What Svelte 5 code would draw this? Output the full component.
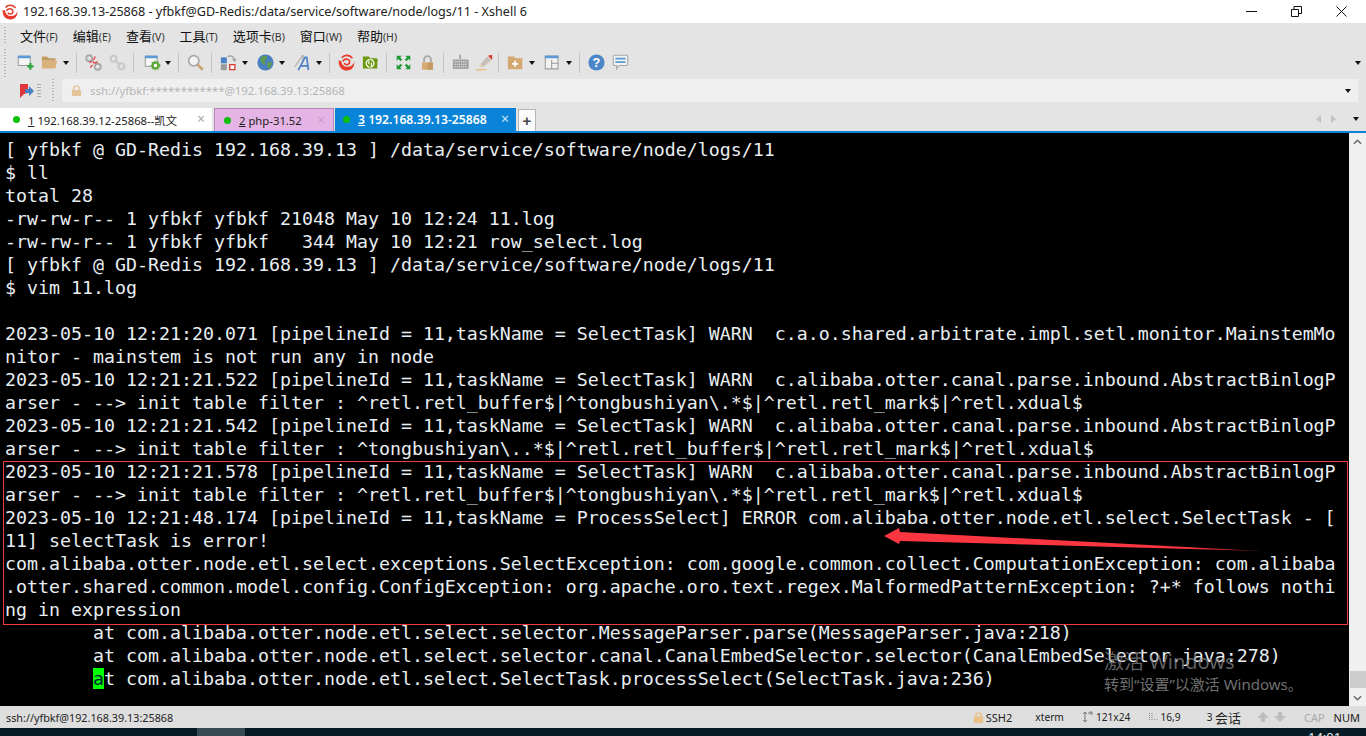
<script lang="ts">
	const menus = [
		['文件', 'F'], ['编辑', 'E'], ['查看', 'V'], ['工具', 'T'],
		['选项卡', 'B'], ['窗口', 'W'], ['帮助', 'H']
	];

	const lines = [
		'[ yfbkf @ GD-Redis 192.168.39.13 ] /data/service/software/node/logs/11',
		'$ ll',
		'total 28',
		'-rw-rw-r-- 1 yfbkf yfbkf 21048 May 10 12:24 11.log',
		'-rw-rw-r-- 1 yfbkf yfbkf   344 May 10 12:21 row_select.log',
		'[ yfbkf @ GD-Redis 192.168.39.13 ] /data/service/software/node/logs/11',
		'$ vim 11.log',
		'',
		'2023-05-10 12:21:20.071 [pipelineId = 11,taskName = SelectTask] WARN  c.a.o.shared.arbitrate.impl.setl.monitor.MainstemMo',
		'nitor - mainstem is not run any in node',
		'2023-05-10 12:21:21.522 [pipelineId = 11,taskName = SelectTask] WARN  c.alibaba.otter.canal.parse.inbound.AbstractBinlogP',
		'arser - --> init table filter : ^retl.retl_buffer$|^tongbushiyan\\.*$|^retl.retl_mark$|^retl.xdual$',
		'2023-05-10 12:21:21.542 [pipelineId = 11,taskName = SelectTask] WARN  c.alibaba.otter.canal.parse.inbound.AbstractBinlogP',
		'arser - --> init table filter : ^tongbushiyan\\..*$|^retl.retl_buffer$|^retl.retl_mark$|^retl.xdual$',
		'2023-05-10 12:21:21.578 [pipelineId = 11,taskName = SelectTask] WARN  c.alibaba.otter.canal.parse.inbound.AbstractBinlogP',
		'arser - --> init table filter : ^retl.retl_buffer$|^tongbushiyan\\.*$|^retl.retl_mark$|^retl.xdual$',
		'2023-05-10 12:21:48.174 [pipelineId = 11,taskName = ProcessSelect] ERROR com.alibaba.otter.node.etl.select.SelectTask - [',
		'11] selectTask is error!',
		'com.alibaba.otter.node.etl.select.exceptions.SelectException: com.google.common.collect.ComputationException: com.alibaba',
		'.otter.shared.common.model.config.ConfigException: org.apache.oro.text.regex.MalformedPatternException: ?+* follows nothi',
		'ng in expression',
		'        at com.alibaba.otter.node.etl.select.selector.MessageParser.parse(MessageParser.java:218)',
		'        at com.alibaba.otter.node.etl.select.selector.canal.CanalEmbedSelector.selector(CanalEmbedSelector.java:278)'
	];
</script>

<div class="window">
	<header class="title">
		<svg class="logo" viewBox="0 0 16 16" width="16" height="16">
			<path d="M.5 6c0 6 3 9.500 8 9.500s7-4 7-8.500c-1 3-3 5-6.500 5S3.500 10 3 6.500z" fill="#e8392c" />
			<path d="M6 8.500c.5 2 3.500 2 4.500.5s.5-3.500-1.500-4-4 .5-4.500 2M3.500 3.500C6 .5 11 .5 13.500 4" fill="none" stroke="#e8392c" stroke-width="1.500" />
		</svg>
		<span class="title__text">192.168.39.13-25868 - yfbkf@GD-Redis:/data/service/software/node/logs/11 - Xshell 6</span>
		<div class="title__controls">
			<svg viewBox="0 0 11 11" width="11" height="11"><path d="M0 5.500h11" stroke="#111" fill="none" /></svg>
			<svg viewBox="0 0 11 11" width="11" height="11"><path d="M.5 3.500h7v7h-7zM3 3.500V.5h7.500v7h-3" stroke="#111" fill="none" /></svg>
			<svg viewBox="0 0 11 11" width="11" height="11"><path d="M.5.500l10 10M10.500.500l-10 10" stroke="#111" fill="none" /></svg>
		</div>
	</header>

	<nav class="menu">
		<span class="grip"></span>
		{#each menus as m}
			<span class="menu__item">{m[0]}<small>({m[1]})</small></span>
		{/each}
	</nav>

	<div class="toolbar">
		<span class="grip"></span>
		<!-- new session -->
		<svg class="ic" viewBox="0 0 20 20"><path d="M1.500 2.500h14v11h-14z" fill="#f6f6f6" stroke="#8a8a8a" /><path d="M1 2h15v3H1z" fill="#5b9bd5" /><path d="M12 14.500h7.500M15.750 10.500v8" stroke="#2aa63a" stroke-width="2.500" /></svg>
		<!-- open -->
		<svg class="ic ic--gap" viewBox="0 0 20 20"><path d="M1 3h6l2 2h8v3H1z" fill="#c49a63" /><path d="M1 17V8h18l-2 9z" fill="#dcb27c" /></svg>
		<i class="drop"></i><i class="sep"></i>
		<!-- connect / disconnect -->
		<svg class="ic" viewBox="0 0 20 20"><circle cx="5" cy="5" r="3.500" fill="none" stroke="#a9a9a9" stroke-width="2.200" /><circle cx="15" cy="15" r="3.500" fill="none" stroke="#a9a9a9" stroke-width="2.200" /><path d="M8 9l-3 1M11 11l4-2M12 3l-2 4M6 16l3-3M9 8l2 3" stroke="#e2474c" stroke-width="1.600" /></svg>
		<svg class="ic" viewBox="0 0 20 20"><circle cx="5.500" cy="5.500" r="3.500" fill="none" stroke="#c8c8c8" stroke-width="2.400" /><circle cx="14.500" cy="14.500" r="3.500" fill="none" stroke="#c8c8c8" stroke-width="2.400" /><path d="M7 7l6 6" stroke="#c8c8c8" stroke-width="2.400" /></svg>
		<i class="sep"></i>
		<!-- properties -->
		<svg class="ic ic--gap ic--in" viewBox="0 0 20 20"><path d="M1.500 2.500h14v12h-14z" fill="#f6f6f6" stroke="#8a8a8a" /><path d="M1 2h15v3H1z" fill="#5b9bd5" /><circle cx="13.500" cy="13.500" r="3.300" fill="#fff" stroke="#5fa83a" stroke-width="2.500" /><circle cx="13.500" cy="13.500" r="5" fill="none" stroke="#5fa83a" stroke-width="1.500" stroke-dasharray="1.800 1.800" /></svg>
		<i class="drop"></i><i class="sep"></i>
		<!-- find -->
		<svg class="ic" viewBox="0 0 20 20"><circle cx="8" cy="8" r="6" fill="#f2f2f2" stroke="#a9a9a9" stroke-width="2" /><path d="M12.500 12.500l6 6" stroke="#c9a070" stroke-width="3" /></svg>
		<i class="sep"></i>
		<!-- transfer layout -->
		<svg class="ic ic--gap" viewBox="0 0 20 20"><path d="M1 4h7v7H1z" fill="#4a80c4" /><path d="M1 12h7v7H1z" fill="#9a9a9a" /><path d="M11.500 12.500h6v6h-6z" fill="#fff" stroke="#d9352c" stroke-width="1.500" /><path d="M9 3c4-2 8 0 8 5M15 6l2 2 2-2" fill="none" stroke="#9a9a9a" stroke-width="1.500" /></svg>
		<i class="drop drop--wide"></i>
		<!-- globe -->
		<svg class="ic ic--gap" viewBox="0 0 20 20"><circle cx="10" cy="10" r="9.500" fill="#4a80c4" /><path d="M5 3l6-1 1 3-3 3 1 5-3-1-3-4zM13 9l5 1-2 5-3 3-1-5z" fill="#5f9a4e" /></svg>
		<i class="drop drop--wide"></i>
		<!-- font -->
		<svg class="ic ic--gap" viewBox="0 0 20 20"><path d="M1 15L10 2h1l-1 8" fill="none" stroke="#b0b0b0" stroke-width="1.500" /><path d="M5 19L13 4h2l2 15M8 14h8" fill="none" stroke="#4a80c4" stroke-width="2" /></svg>
		<i class="drop"></i><i class="sep"></i>
		<!-- xshell -->
		<svg class="ic" viewBox="0 0 16 16"><path d="M.5 6c0 6 3 9.500 8 9.500s7-4 7-8.500c-1 3-3 5-6.500 5S3.500 10 3 6.500z" fill="#e8392c" /><path d="M6 8.500c.5 2 3.500 2 4.500.5s.5-3.500-1.500-4-4 .5-4.500 2M3.500 3.500C6 .5 11 .5 13.500 4" fill="none" stroke="#e8392c" stroke-width="1.500" /></svg>
		<!-- xftp -->
		<svg class="ic" viewBox="0 0 20 20"><path d="M1 3h7l2 2h8v2l1 1-1 1v8H1z" fill="#6c9a0c" /><circle cx="9.500" cy="11" r="4.500" fill="none" stroke="#fff" stroke-width="1.600" /><path d="M9.500 6.500v9" stroke="#6c9a0c" stroke-width="1.500" /><path d="M8 8v4M11 10v4" stroke="#fff" stroke-width="1.300" /></svg>
		<i class="sep"></i>
		<!-- fullscreen -->
		<svg class="ic" viewBox="0 0 20 20"><path d="M2 2h6L6 4l2.500 2.500L6.500 8.500 4 6 2 8zM18 2v6l-2-2-2.500 2.500-2-2L14 4l-2-2zM18 18h-6l2-2-2.500-2.500 2-2L16 14l2-2zM2 18v-6l2 2 2.500-2.500 2 2L6 16l2 2z" fill="#1f9a35" /></svg>
		<!-- lock -->
		<svg class="ic" viewBox="0 0 20 20"><path d="M6 10V6.500a4 4 0 0 1 8 0V10" fill="none" stroke="#a9a9a9" stroke-width="2.200" /><path d="M3.500 10h13v8.500h-13z" fill="#d8aa72" /><path d="M10 10h6.500v8.500H10z" fill="#c49a63" /></svg>
		<i class="sep"></i>
		<!-- keyboard -->
		<svg class="ic" viewBox="0 0 20 20"><path d="M9.500 1v5" stroke="#777" stroke-width="1.200" /><path d="M1 6.500h18.500v11H1z" fill="#9e9e9e" /><path d="M3 9h15M3 12h15M3 15h15" stroke="#eee" stroke-width="1.200" stroke-dasharray="1.500 1" /></svg>
		<!-- highlight -->
		<svg class="ic ic--gap" viewBox="0 0 20 20"><path d="M5 12l8-9 5 4-9 8z" fill="#c8c0b8" /><path d="M4 13l5 2-4 1z" fill="#e9c9a8" /><path d="M14 2l5-1v6z" fill="#d9352c" /><path d="M0 18.500h12" stroke="#e5b77d" stroke-width="1.500" /></svg>
		<i class="sep"></i>
		<!-- new folder -->
		<svg class="ic ic--gap" viewBox="0 0 20 20"><path d="M1 3h7l2 2h8v13H1z" fill="#d4a873" /><path d="M9.500 8v7M6 11.500h7" stroke="#fff" stroke-width="2" /></svg>
		<i class="drop drop--wide"></i>
		<!-- layout -->
		<svg class="ic ic--gap" viewBox="0 0 20 20"><path d="M1.500 2.500h15v15h-15zM9 7v10.500M9 11h7.500" fill="#f2f2f2" stroke="#999" stroke-width="1.200" /><path d="M1 2h16v3H1z" fill="#5b9bd5" /></svg>
		<i class="drop"></i><i class="sep"></i>
		<!-- help -->
		<svg class="ic" viewBox="0 0 20 20"><circle cx="10" cy="10" r="9.500" fill="#4a86c8" /><text x="10" y="15.500" class="ic__q">?</text></svg>
		<!-- chat -->
		<svg class="ic" viewBox="0 0 20 20"><path d="M3 1.500h14a1.500 1.500 0 0 1 1.500 1.500v9a1.500 1.500 0 0 1-1.500 1.500H8.500l-3 4v-4H3A1.500 1.500 0 0 1 1.500 12V3A1.500 1.500 0 0 1 3 1.500z" fill="#f2f2f2" stroke="#a9a9a9" stroke-width="1.300" /><path d="M4 5.500h12M4 9.500h12" stroke="#5b9bd5" stroke-width="2" /></svg>
		<i class="drop drop--end"></i>
	</div>

	<div class="address">
		<svg class="flag" viewBox="0 0 14 14" width="14" height="14"><path d="M0 0h8v9l-4 1-4 4z" fill="#e0353a" /><path d="M5 5h4V2l5 5-5 5V9H5z" fill="#4a80c4" /></svg>
		<span class="address__dots"></span>
		<span class="grip grip--short"></span>
		<div class="address__field">
			<svg viewBox="0 0 12 12" width="11" height="11"><path d="M3 6V4a3 3 0 0 1 6 0v2" fill="none" stroke="#e5c49a" stroke-width="1.500" /><path d="M1 5.500h10V12H1z" fill="#e5c49a" /></svg>
			<span>ssh://yfbkf:************@192.168.39.13:25868</span>
			<i class="drop drop--end"></i>
		</div>
	</div>

	<div class="tabs">
		<div class="tab">
			<i class="dot"></i><span><u>1</u> 192.168.39.12-25868--凯文</span><b class="tab__x">×</b>
		</div>
		<div class="tab tab--php">
			<i class="dot"></i><span><u>2</u> php-31.52</span><b class="tab__x">×</b>
		</div>
		<div class="tab tab--active">
			<i class="dot"></i><span><u>3</u> 192.168.39.13-25868</span><b class="tab__x">×</b>
		</div>
		<div class="tab__add">+</div>
		<div class="tabs__nav">
			<i class="arrow arrow--left"></i>
			<i class="arrow arrow--right"></i>
			<i class="drop"></i>
		</div>
	</div>

	<main class="term">
		<pre class="term__text">{lines.join('\n')}{'\n        '}<span class="cursor">a</span>t com.alibaba.otter.node.etl.select.SelectTask.processSelect(SelectTask.java:236)</pre>
		<div class="scrollbar">
			<svg viewBox="0 0 10 6" width="9" height="6" class="scrollbar__up"><path d="M1 5l4-4 4 4" fill="none" stroke="#666" stroke-width="1.500" /></svg>
			<span class="scrollbar__thumb"></span>
			<svg viewBox="0 0 10 6" width="9" height="6"><path d="M1 1l4 4 4-4" fill="none" stroke="#666" stroke-width="1.500" /></svg>
		</div>

		<!-- annotation drawn on the screenshot -->
		<div class="mark"></div>
		<svg class="pointer" viewBox="0 0 380 26" width="380" height="26">
			<defs>
				<linearGradient id="tail">
					<stop offset="0.8" stop-color="#fb3640" />
					<stop offset="1" stop-color="#8a1a20" />
				</linearGradient>
			</defs>
			<path d="M0 8L15 0l1 4L378 23 16 13l-1 3z" fill="url(#tail)" />
		</svg>
		<div class="activate">
			<div class="activate__big">激活 Windows</div>
			<div>转到“设置”以激活 Windows。</div>
		</div>
	</main>

	<footer class="status">
		<span class="status__addr">ssh://yfbkf@192.168.39.13:25868</span>
		<div class="status__right">
			<span class="st st--ssh"><svg viewBox="0 0 12 12" width="11" height="11"><path d="M3 6V4a3 3 0 0 1 6 0v2" fill="none" stroke="#e8bf85" stroke-width="1.500" /><path d="M1 5h10v7H1z" fill="#e8bf85" /></svg>SSH2</span>
			<span class="st st--xterm st--narrow">xterm</span>
			<span class="st st--size st--narrow"><svg viewBox="0 0 12 12" width="12" height="12"><path d="M3 1v10M1 3l2-2 2 2M1 9l2 2 2-2M6 2h5M9 0v4" fill="none" stroke="#777" /></svg>121x24</span>
			<span class="st st--pos st--narrow"><svg viewBox="0 0 10 10" width="10" height="10"><path d="M1.500 1v8M4 1v8M6.500 7v2M9 7v2" stroke="#888" stroke-dasharray="1 1" /></svg>16,9</span>
			<span class="st st--sess">3&nbsp;<em>会话</em></span>
			<span class="st st--arrows">
				<svg viewBox="0 0 12 10" width="12" height="10"><path d="M6 0l6 6H8v4H4V6H0z" fill="#bdbdbd" /></svg>
				<svg viewBox="0 0 12 10" width="12" height="10"><path d="M6 10l6-6H8V0H4v4H0z" fill="#bdbdbd" /></svg>
			</span>
			<span class="st st--cap">CAP</span>
			<span class="st">NUM</span>
		</div>
	</footer>

	<div class="taskbar"><span class="taskbar__btn"></span><span class="taskbar__clock">14:01</span></div>
</div>

<style>
	:global(body) {
		margin: 0;
		background: #000;
	}

	.window {
		width: 1366px;
		height: 736px;
		overflow: hidden;
		display: flex;
		flex-direction: column;
		font-family: "Noto Sans", "Noto Sans CJK SC", sans-serif;
		color: #222;
	}

	.title {
		height: 23px;
		flex: none;
		background: #fff;
		display: flex;
		align-items: center;
		padding-left: 2px;
		font-size: 12.600px;
		color: #222;
	}

	.logo {
		margin-right: 5px;
	}

	.title__controls {
		margin-left: auto;
		display: flex;
		gap: 34px;
		padding-right: 19px;
		margin-top: -1px;
	}

	.menu {
		height: 23px;
		flex: none;
		background: #e4e4e4;
		display: flex;
		align-items: center;
		padding-left: 4px;
		padding-top: 2px;
		box-sizing: border-box;
		font-size: 13px;
		color: #111;
	}

	.menu__item {
		margin-left: 14px;
		margin-right: 1px;
		white-space: nowrap;
	}

	.menu__item small {
		font-size: 10.500px;
		color: #333;
	}

	.grip {
		width: 2px;
		height: 18px;
		flex: none;
		background: repeating-linear-gradient(#b5b5b5 0 1px, transparent 1px 3px);
	}

	.grip--short {
		height: 23px;
		margin: 0 8px 0 11px;
	}

	.toolbar {
		height: 33px;
		flex: none;
		background: #e4e4e4;
		display: flex;
		align-items: center;
		padding-left: 4px;
		box-sizing: border-box;
	}

	.toolbar > .grip {
		height: 28px;
		margin-right: 11px;
	}

	.ic {
		width: 17px;
		height: 17px;
		flex: none;
		margin-right: 7px;
	}

	.ic--gap {
		margin-right: 5px;
	}

	.ic--in {
		margin-left: 2px;
		margin-right: 4px;
	}

	.ic__q {
		font: bold 15px "Liberation Sans", sans-serif;
		fill: #fff;
		text-anchor: middle;
	}

	.drop {
		width: 0;
		height: 0;
		flex: none;
		border: 3px solid transparent;
		border-top: 4px solid #111;
		border-bottom: 0;
		margin-right: 7px;
	}

	.drop--wide {
		margin-right: 9px;
	}

	.drop--end {
		margin-left: auto;
		margin-right: 0;
	}

	.toolbar .drop--end {
		margin-right: 5px;
	}

	.sep {
		width: 1px;
		height: 20px;
		flex: none;
		background: #c4c4c4;
		margin-right: 8px;
	}

	.address {
		height: 23px;
		flex: none;
		background: #e4e4e4;
		display: flex;
		align-items: center;
		padding-left: 20px;
	}

	.address__dots {
		width: 4px;
		height: 13px;
		flex: none;
		margin-left: 3px;
		background: repeating-linear-gradient(#aaa 0 1px, transparent 1px 3px);
	}

	.address__field {
		flex: 1;
		height: 23px;
		margin-right: 8px;
		background: #efefef;
		display: flex;
		align-items: center;
		gap: 8px;
		padding: 0 7px 0 9px;
		font-size: 11.400px;
		color: #b5b5b5;
	}

	.tabs {
		height: 29px;
		flex: none;
		background: #e4e4e4;
		display: flex;
		align-items: flex-end;
		font-size: 11.300px;
		border-bottom: 2px solid #0a84d8;
	}

	.tab {
		width: 212px;
		height: 23px;
		box-sizing: border-box;
		background: #fff;
		display: flex;
		align-items: center;
		padding-left: 13px;
		gap: 8px;
		position: relative;
		white-space: nowrap;
	}

	.tab--php {
		width: 120px;
		margin-left: 2px;
		padding-left: 9px;
		background: #e4b5e4;
		border: 1px solid #b98ab9;
		border-bottom: 0;
	}

	.tab--active {
		width: 181px;
		margin-left: 1px;
		padding-left: 8px;
		background: #0a84d8;
		color: #fff;
		font-size: 12.200px;
		font-weight: 600;
	}

	.tab__x {
		position: absolute;
		right: 7px;
		top: 1px;
		font-weight: 400;
		font-size: 14px;
		color: #aaa;
	}

	.tab--php .tab__x {
		color: #c79ac7;
		right: 8px;
	}

	.tab--active .tab__x {
		color: #cfe6f7;
	}

	.dot {
		width: 7px;
		height: 7px;
		flex: none;
		border-radius: 50%;
		background: #0cc00c;
	}

	.tab__add {
		width: 18px;
		height: 22px;
		margin-left: 2px;
		box-sizing: border-box;
		background: #fafafa;
		border: 1px solid #b5b5b5;
		border-bottom: 0;
		display: grid;
		place-items: center;
		font: bold 15px "Liberation Sans", sans-serif;
		color: #444;
	}

	.tabs__nav {
		margin-left: auto;
		height: 24px;
		display: flex;
		align-items: center;
		padding-right: 7px;
	}

	.tabs__nav .drop {
		margin: 0;
	}

	.arrow {
		width: 0;
		height: 0;
		border: 5px solid transparent;
		border-top-width: 4.500px;
		border-bottom-width: 4.500px;
	}

	.arrow--left {
		border-right: 5px solid #c4c4c4;
		border-left: 0;
		margin-right: 10px;
	}

	.arrow--right {
		border-left: 5px solid #c4c4c4;
		border-right: 0;
		margin-right: 17px;
	}

	.term {
		flex: 1;
		min-height: 0;
		background: #000;
		position: relative;
		display: flex;
		justify-content: space-between;
	}

	.term__text {
		margin: 0;
		padding: 5px 0 0 5px;
		font: 18.270px/23px "DejaVu Sans Mono", monospace;
		color: #e8eef2;
		white-space: pre;
		width: 1349px;
		box-sizing: border-box;
		overflow: hidden;
	}

	.cursor {
		background: #00ff00;
		color: #023;
	}

	.scrollbar {
		width: 17px;
		flex: none;
		background: #f0f0f0;
		display: flex;
		flex-direction: column;
		align-items: center;
		justify-content: flex-end;
		padding-bottom: 5px;
		box-sizing: border-box;
		position: relative;
	}

	.scrollbar__up {
		position: absolute;
		top: 6px;
		left: 4px;
	}

	.scrollbar__thumb {
		width: 16px;
		height: 17px;
		background: #cdcdcd;
		margin-bottom: 7px;
	}

	.mark {
		position: absolute;
		left: 3px;
		top: 328px;
		width: 1345px;
		height: 164px;
		box-sizing: border-box;
		border: 1px solid #ee3b3b;
		pointer-events: none;
	}

	.pointer {
		position: absolute;
		left: 884px;
		top: 395px;
	}

	.activate {
		position: absolute;
		left: 1104px;
		top: 517px;
		font-size: 15px;
		color: #707070;
		line-height: 20px;
		white-space: nowrap;
	}

	.activate__big {
		font-size: 20px;
		line-height: 24px;
		color: rgba(130, 130, 130, 0.75);
	}

	.status {
		height: 22px;
		flex: none;
		background: #dedede;
		display: flex;
		align-items: center;
		justify-content: space-between;
		font-size: 11px;
		padding-left: 6px;
	}

	.status__addr {
		font-size: 10.800px;
	}

	.status__right {
		display: flex;
		align-items: center;
		padding-right: 6px;
	}

	.st {
		display: inline-flex;
		align-items: center;
		gap: 2px;
		white-space: nowrap;
	}

	.st--narrow { font-size: 10.200px; }
	.st--ssh { margin-right: 23px; }
	.st--xterm { margin-right: 18px; }
	.st--size { margin-right: 18px; }
	.st--pos { margin-right: 26px; }
	.st--sess { margin-right: 16px; gap: 0; font-size: 10px; }
	.st--sess em { font-size: 13px; font-style: normal; }
	.st--arrows { margin-right: 18px; gap: 5px; }
	.st--cap { margin-right: 9px; color: #aaa; }

	.taskbar {
		height: 8px;
		flex: none;
		background: #051b26;
		position: relative;
		overflow: hidden;
	}

	.taskbar__btn {
		position: absolute;
		left: 197px;
		top: 0;
		width: 48px;
		height: 8px;
		background: #364a54;
	}

	.taskbar__clock {
		position: absolute;
		left: 1308px;
		top: 2px;
		font-size: 13px;
		line-height: 14px;
		color: #e8e8e8;
	}
</style>
